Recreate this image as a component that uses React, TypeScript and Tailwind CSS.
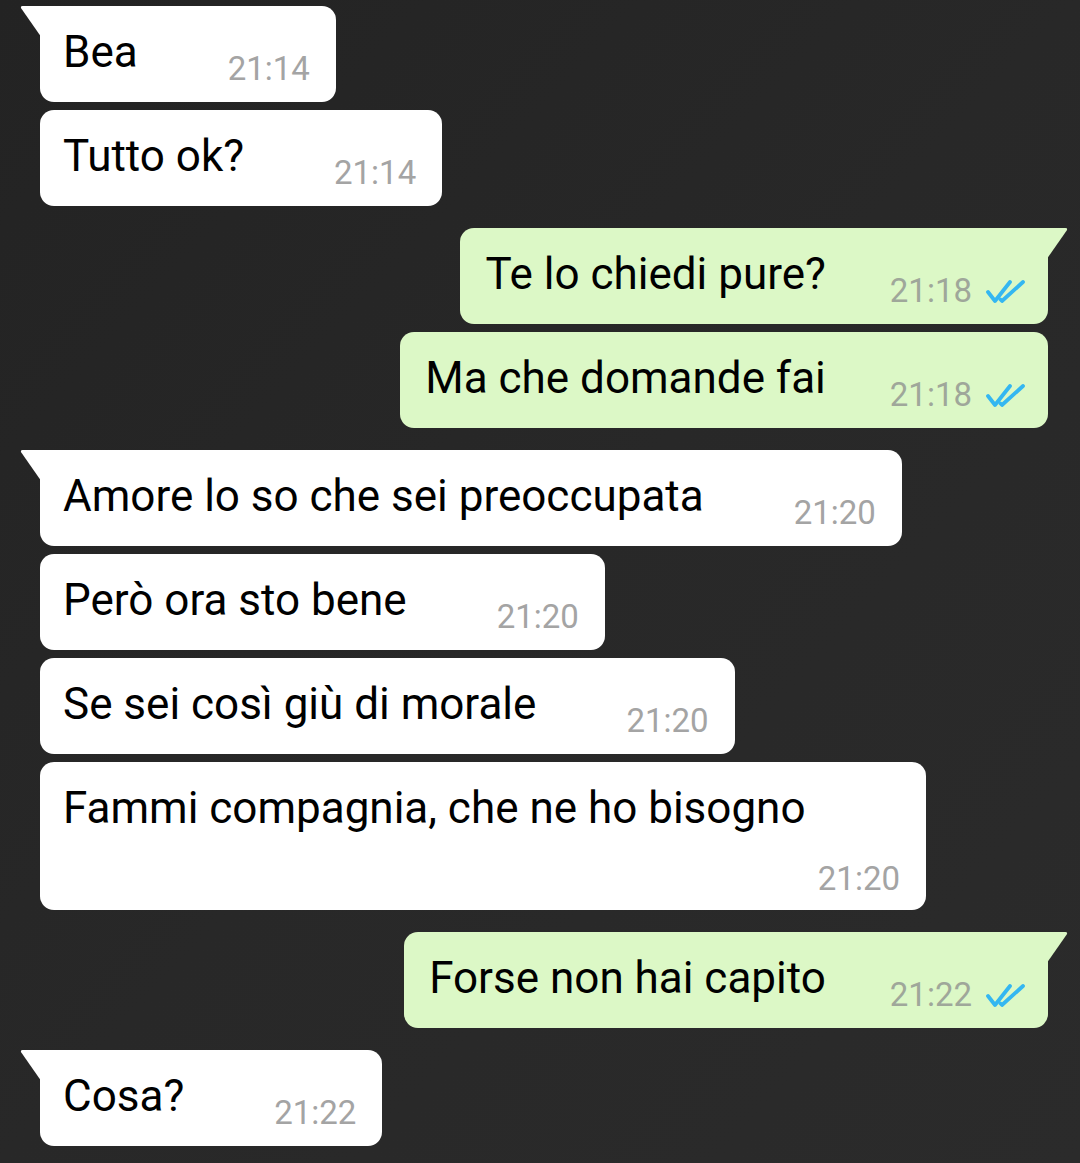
import clsx from 'clsx';

type Message = {
  text: string;
  time: string;
  out?: boolean;
  tail?: boolean;
  wrap?: boolean;
};

const messages: Message[] = [
  { text: 'Bea', time: '21:14', tail: true },
  { text: 'Tutto ok?', time: '21:14' },
  { text: 'Te lo chiedi pure?', time: '21:18', out: true, tail: true },
  { text: 'Ma che domande fai', time: '21:18', out: true },
  { text: 'Amore lo so che sei preoccupata', time: '21:20', tail: true },
  { text: 'Però ora sto bene', time: '21:20' },
  { text: 'Se sei così giù di morale', time: '21:20' },
  { text: 'Fammi compagnia, che ne ho bisogno', time: '21:20', wrap: true },
  { text: 'Forse non hai capito', time: '21:22', out: true, tail: true },
  { text: 'Cosa?', time: '21:22', tail: true },
];

const ReadTicks = () => (
  <svg viewBox="0 0 40 23" className="ml-[13px] h-[23px] w-[40px]" fill="none">
    <path
      d="M3 12 L10 21 L25 2"
      stroke="#34b7f1"
      strokeWidth="3.8"
      strokeLinecap="round"
      strokeLinejoin="round"
    />
    <path d="M15.5 19.5 L17 21 L38 2" stroke="#34b7f1" strokeWidth="3.8" strokeLinecap="round" strokeLinejoin="round" />
  </svg>
);

const Tail = ({ out, color }: { out?: boolean; color: string }) => (
  <svg
    viewBox="0 0 20 30"
    className={clsx('absolute top-0 h-[30px] w-[21px]', out ? 'right-[-20px]' : 'left-[-20px]')}
  >
    {out ? (
      <path d="M0 0 H18 Q20.5 0 19.2 2.5 L0 30 Z" fill={color} />
    ) : (
      <path d="M20 0 H2 Q-0.5 0 0.8 2.5 L20 30 Z" fill={color} />
    )}
  </svg>
);

const Bubble = ({ msg }: { msg: Message }) => {
  const { text, time, out, tail, wrap } = msg;
  return (
    <div
      className={clsx(
        'relative flex rounded-[14px] pt-[20px]',
        out ? 'mr-[32px] self-end bg-[#dcf8c6] pl-[25px] pr-[23px]' : 'ml-[40px] self-start bg-white pl-[23px] pr-[26px]',
        tail && (out ? 'rounded-tr-none' : 'rounded-tl-none'),
        wrap ? 'w-[886px] flex-col pb-[12px]' : 'items-start pb-[14px]'
      )}
    >
      {tail && <Tail out={out} color={out ? '#dcf8c6' : '#ffffff'} />}
      <span className="whitespace-nowrap text-[44px] leading-[52px] text-black">{text}</span>
      <span
        className={clsx(
          'flex items-center whitespace-nowrap text-[33px] leading-[38px]',
          out ? 'text-[#9fa79a]' : 'text-[#a4a4a4]',
          wrap ? 'mt-[26px] self-end' : out ? 'ml-[64px] mt-[24px]' : 'ml-[90px] mt-[24px]'
        )}
      >
        {time}
        {out && <ReadTicks />}
      </span>
    </div>
  );
};

export default function App() {
  return (
    <div
      className="flex h-[1163px] flex-col overflow-hidden bg-[#272727] bg-gradient-to-br from-[#232323] via-[#282828] to-[#2b2b2b] pt-[6px]"
      style={{ fontFamily: 'Roboto, "Noto Sans", sans-serif' }}
    >
      {messages.map((m, i) => (
        <div
          key={i}
          className={clsx('flex flex-col', i === 0 ? '' : m.tail ? 'mt-[22px]' : 'mt-[8px]')}
        >
          <Bubble msg={m} />
        </div>
      ))}
    </div>
  );
}
